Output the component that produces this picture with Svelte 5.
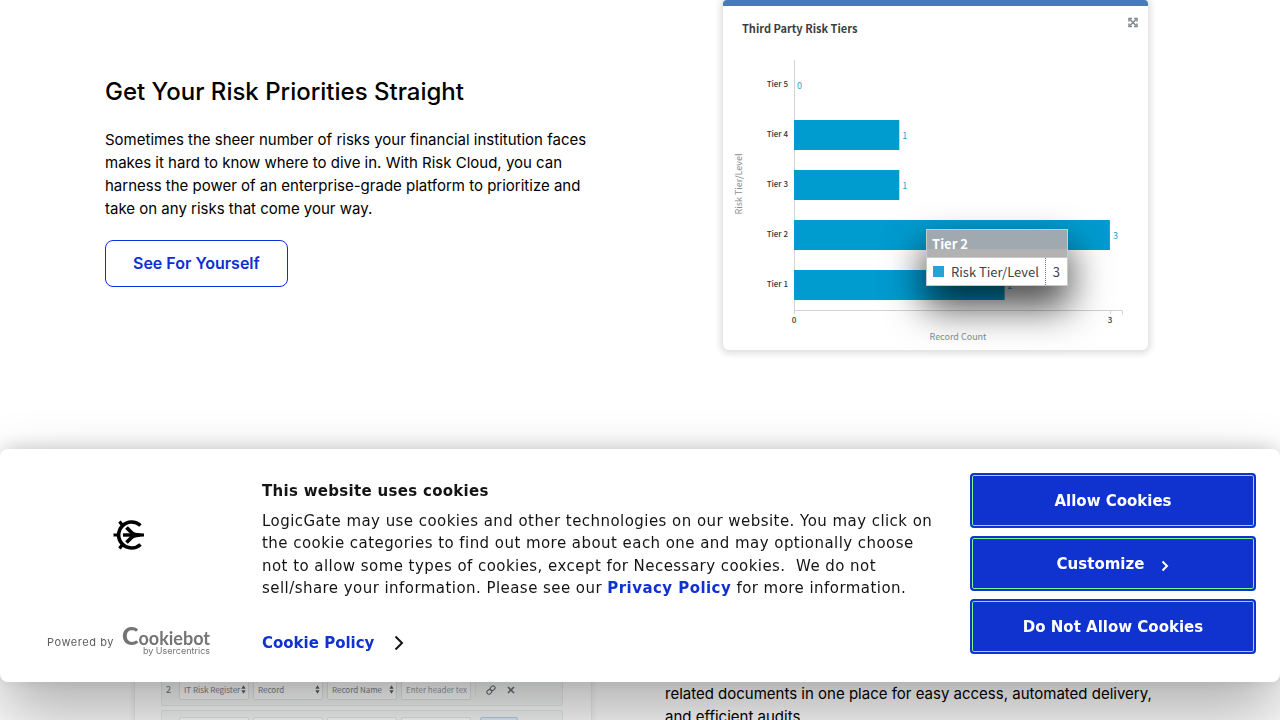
<script>
  const bars = [
    { label: 'Tier 5', value: 0 },
    { label: 'Tier 4', value: 1 },
    { label: 'Tier 3', value: 1 },
    { label: 'Tier 2', value: 3 },
    { label: 'Tier 1', value: 2 }
  ];
  const unit = 105.3;
  const fields = ['IT Risk Register', 'Record', 'Record Name'];
</script>

<main>
  <section class="row intro">
    <div class="copy">
      <h2>Get Your Risk Priorities Straight</h2>
      <p>
        Sometimes the sheer number of risks your financial institution faces makes it hard to know
        where to dive in. With Risk Cloud, you can harness the power of an enterprise-grade platform
        to prioritize and take on any risks that come your way.
      </p>
      <a class="cta" href="#demo">See For Yourself</a>
    </div>

    <figure class="chart-card">
      <svg class="chart" viewBox="0 0 425 344" role="img" aria-label="Third Party Risk Tiers">
        <text class="title" x="19" y="27">Third Party Risk Tiers</text>
        <g class="expand">
          <path d="M407 13.500l6 6M413 13.500l-6 6" />
          <path d="M406 15.500v-3h3M411 12.500h3v3M414 17.500v3h-3M409 20.500h-3v-3" />
        </g>
        <path class="axis" d="M71.500 54v254M71.500 304.500h328v4M387.500 304v4" />
        {#each bars as bar, i}
          <text class="tick" x="65" y={81 + i * 50} text-anchor="end">{bar.label}</text>
          <rect x="71" y={64 + i * 50} width={bar.value * unit} height="30" fill="#009bcf" />
          <text class="value" x={74 + bar.value * unit} y={83 + i * 50}>{bar.value}</text>
        {/each}
        <text class="tick" x="71" y="317" text-anchor="middle">0</text>
        <text class="tick" x="387" y="317" text-anchor="middle">3</text>
        <text class="name" x="235" y="334" text-anchor="middle">Record Count</text>
        <text class="name" transform="translate(19 178) rotate(-90)" text-anchor="middle">Risk Tier/Level</text>
      </svg>
      <div class="tooltip">
        <div class="tip-head">Tier 2</div>
        <div class="tip-body">
          <span class="tip-name"><i></i>Risk Tier/Level</span>
          <span class="tip-value">3</span>
        </div>
      </div>
    </figure>
  </section>

  <section class="row audits">
    <div class="builder">
      <div class="line">
        <span class="index">2</span>
        {#each fields as field}
          <button class="field" type="button">
            {field}
            <svg viewBox="0 0 6 10" width="5" height="9"><path d="M3 0l2.500 4h-5zM3 10l2.500-4h-5z" fill="#555d66" /></svg>
          </button>
        {/each}
        <input class="field" aria-label="Header text" placeholder="Enter header tex" />
        <span class="divider"></span>
        <svg class="glyph" viewBox="0 0 10 10" width="10" height="10" fill="none" stroke="#69717a" stroke-width="1.1">
          <rect x="4.200" y="1.200" width="5" height="4" rx="2" transform="rotate(-45 6.700 3.200)" />
          <rect x="0.800" y="4.800" width="5" height="4" rx="2" transform="rotate(-45 3.300 6.800)" />
        </svg>
        <svg class="glyph" viewBox="0 0 10 10" width="10" height="10" fill="none" stroke="#69717a" stroke-width="1.600">
          <path d="M2 2l6 6M8 2l-6 6" />
        </svg>
      </div>
      <div class="line">
        <span class="index"></span>
        <span class="field"></span>
        <span class="field"></span>
        <span class="field"></span>
        <span class="field"></span>
        <span class="divider"></span>
        <span class="chip"></span>
      </div>
    </div>
    <p>related documents in one place for easy access, automated delivery, and efficient audits.</p>
  </section>
</main>

<aside class="cookies" aria-label="Cookie consent">
  <div class="brand">
    <svg class="mark" viewBox="0 0 32 32" width="32" height="32" fill="none" stroke="#000">
      <path d="M27.500 6.500A13 13 0 1 0 27.500 25.500" stroke-width="3.600" />
      <path d="M0.500 16h5M6.500 2.500l3 4M6.500 29.500l3-4" stroke-width="3.200" />
      <path d="M10 16h17" stroke-width="3.400" />
      <path d="M13.500 8.500l6 6M13.500 23.500l6-6" stroke-width="3.800" />
      <path d="M17 11q4 3.500 14 3.500v3q-10 0-14 3.500l2-5z" fill="#000" stroke="none" />
    </svg>
    <div class="powered">
      <span>Powered by</span>
      <a class="bot" href="#cookiebot">
        <strong><b>C</b>ookiebot</strong>
        <small>by Usercentrics</small>
      </a>
    </div>
  </div>
  <div class="notice">
    <h3>This website uses cookies</h3>
    <p>
      LogicGate may use cookies and other technologies on our website. You may click on the cookie
      categories to find out more about each one and may optionally choose not to allow some types of
      cookies, except for Necessary cookies.&nbsp; We do not sell/share your information. Please see
      our <a href="#privacy">Privacy Policy</a> for more information.
    </p>
    <a class="policy" href="#policy">
      Cookie Policy
      <svg viewBox="0 0 10 16" width="10" height="16" fill="none" stroke="#141414" stroke-width="2"><path d="M1.500 1.500L8 8l-6.500 6.500" /></svg>
    </a>
  </div>
  <div class="actions">
    <button type="button">Allow Cookies</button>
    <button type="button">
      Customize
      <svg viewBox="0 0 8 12" width="8" height="12" fill="none" stroke="#fff" stroke-width="2"><path d="M1.500 1.500L6 6l-4.500 4.500" /></svg>
    </button>
    <button type="button">Do Not Allow Cookies</button>
  </div>
</aside>

<style>
  :global(body) {
    margin: 0;
    overflow: hidden;
    background: #fff;
    color: #000;
    font-family: Inter, sans-serif;
  }
  * {
    box-sizing: border-box;
  }
  main {
    max-width: 1070px;
    margin: 0 auto;
    font-size: 15px;
    line-height: 23px;
  }
  .row {
    display: grid;
    grid-template-columns: 1fr 1fr;
    gap: 50px;
  }
  h2,
  h3,
  p {
    margin: 0;
  }
  .copy {
    padding: 76px 10px 0 0;
  }
  h2 {
    margin-bottom: 20px;
    font-size: 24px;
    font-weight: 500;
    line-height: 32px;
  }
  .cta {
    display: inline-block;
    margin-top: 20px;
    padding: 11px 27px;
    border: 1px solid #0a2fd6;
    border-radius: 8px;
    color: #0a2fd6;
    font-size: 16px;
    font-weight: 600;
    text-decoration: none;
  }
  .chart-card {
    position: relative;
    margin: 0 27px 0 58px;
    border-top: 6px solid #4a78b8;
    border-radius: 4px 4px 6px 6px;
    background: #fff;
    box-shadow: 0 1px 6px 3px rgba(0, 0, 0, 0.12);
    font-family: 'Noto Sans CJK SC', sans-serif;
  }
  .chart {
    display: block;
    width: 100%;
    height: auto;
  }
  .title {
    font-size: 11px;
    font-weight: 700;
    fill: #3a3f44;
  }
  .tick {
    font-size: 8px;
    font-weight: 500;
    fill: #30343a;
  }
  .value {
    font-size: 9px;
    fill: #1fa3d2;
  }
  .name {
    font-size: 9px;
    fill: #858e96;
  }
  .axis {
    fill: none;
    stroke: #d0d3d6;
  }
  .expand {
    fill: none;
    stroke: #808890;
    stroke-width: 1.5;
  }
  .tooltip {
    position: absolute;
    top: 223px;
    left: 203px;
    width: 142px;
    border: 1px solid #c8cacc;
    background: #fff;
    box-shadow: 0 20px 38px 2px rgba(0, 0, 0, 0.7);
    color: #3d4247;
    font-size: 13px;
    line-height: 27px;
  }
  .tip-head {
    padding-left: 5px;
    border-bottom: 1px solid #c8cacc;
    background: linear-gradient(#a0a9b0 72%, #b2b2b2 72%);
    color: #fff;
    font-weight: 700;
  }
  .tip-body {
    display: flex;
  }
  .tip-name {
    display: flex;
    flex: 1;
    align-items: center;
    gap: 7px;
    padding-left: 6px;
    border-right: 1px dotted #777;
    white-space: nowrap;
  }
  .tip-name i {
    width: 11px;
    height: 11px;
    background: #25a3d2;
  }
  .tip-value {
    padding: 0 7px;
  }
  .audits {
    margin-top: 322px;
  }
  .audits > p {
    padding-top: 10px;
  }
  .builder {
    display: grid;
    gap: 4px;
    margin: 0 23px 0 29px;
    padding: 0 28px 0 26px;
    border: 1px solid #eee;
    box-shadow: 0 0 4px 2px rgba(0, 0, 0, 0.05);
    font-family: 'Noto Sans CJK SC', sans-serif;
  }
  .line {
    display: flex;
    align-items: center;
    gap: 4px;
    height: 33px;
    border: 1px solid #e8eced;
    border-radius: 2px;
    background: #f7f8f8;
  }
  .index {
    width: 13px;
    color: #7f868d;
    font-size: 9px;
    font-weight: 500;
    text-align: center;
  }
  .line .field {
    display: flex;
    flex: 0 0 70px;
    align-items: center;
    justify-content: space-between;
    width: 70px;
    min-width: 0;
    height: 20px;
    padding: 0 2px 0 4px;
    border: 1px solid #e3e6e8;
    border-radius: 2px;
    background: #fff;
    color: #7d848b;
    font: 400 8px/18px 'Noto Sans CJK SC', sans-serif;
    white-space: nowrap;
  }
  input.field::placeholder {
    color: #9aa1a7;
  }
  .divider {
    width: 1px;
    height: 14px;
    background: #eceeef;
  }
  .glyph {
    margin: 0 0 0 6px;
  }
  .chip {
    width: 38px;
    height: 20px;
    border: 1px solid #b7cde4;
    border-radius: 2px;
    background: #e5effa;
  }
  .cookies {
    position: fixed;
    right: 0;
    bottom: 38px;
    left: 0;
    display: grid;
    grid-template-columns: 214px 1fr 286px;
    padding: 24px 24px 26px;
    border-radius: 8px;
    background: #fff;
    box-shadow:
      0 32px 68px rgba(0, 0, 0, 0.32),
      0 -4px 20px -4px rgba(0, 0, 0, 0.2);
    color: #141414;
    font-family: 'DejaVu Sans', sans-serif;
    font-size: 15px;
    line-height: 1.5;
  }
  .brand {
    display: flex;
    flex-direction: column;
    justify-content: space-between;
    padding: 46px 0 0 23px;
  }
  .mark {
    margin-left: 66px;
  }
  .powered {
    display: flex;
    align-items: center;
    gap: 8px;
    color: #5c5c5c;
    font-family: Inter, sans-serif;
    font-size: 11px;
    letter-spacing: 0.05em;
    line-height: 16px;
  }
  .bot {
    display: grid;
    justify-items: end;
    color: #747474;
    letter-spacing: 0;
    text-decoration: none;
  }
  .bot strong {
    font: 700 18px/16px Lato, sans-serif;
  }
  .bot b {
    font-size: 25px;
    line-height: 16px;
  }
  .bot small {
    font-size: 9px;
    line-height: 10px;
  }
  .notice {
    padding: 7px 30px 2px 24px;
  }
  .notice p {
    letter-spacing: 0.03em;
  }
  h3 {
    margin-bottom: 7px;
    font-size: 15px;
    font-weight: 700;
    letter-spacing: 0.02em;
  }
  .notice a {
    color: #1032cf;
    font-weight: 700;
    text-decoration: none;
  }
  .policy {
    display: inline-flex;
    align-items: center;
    gap: 20px;
    margin-top: 32px;
  }
  .actions {
    display: grid;
    align-content: start;
    gap: 8px;
  }
  .actions button {
    display: flex;
    align-items: center;
    justify-content: center;
    gap: 17px;
    height: 55px;
    border: 2px solid #1032cf;
    border-radius: 4px;
    background: #1032cf;
    box-shadow: inset 0 0 0 1px #7cf58c;
    color: #fff;
    font: 700 15px/22px 'DejaVu Sans', sans-serif;
  }
  .actions svg {
    position: relative;
    top: 2px;
  }
</style>
